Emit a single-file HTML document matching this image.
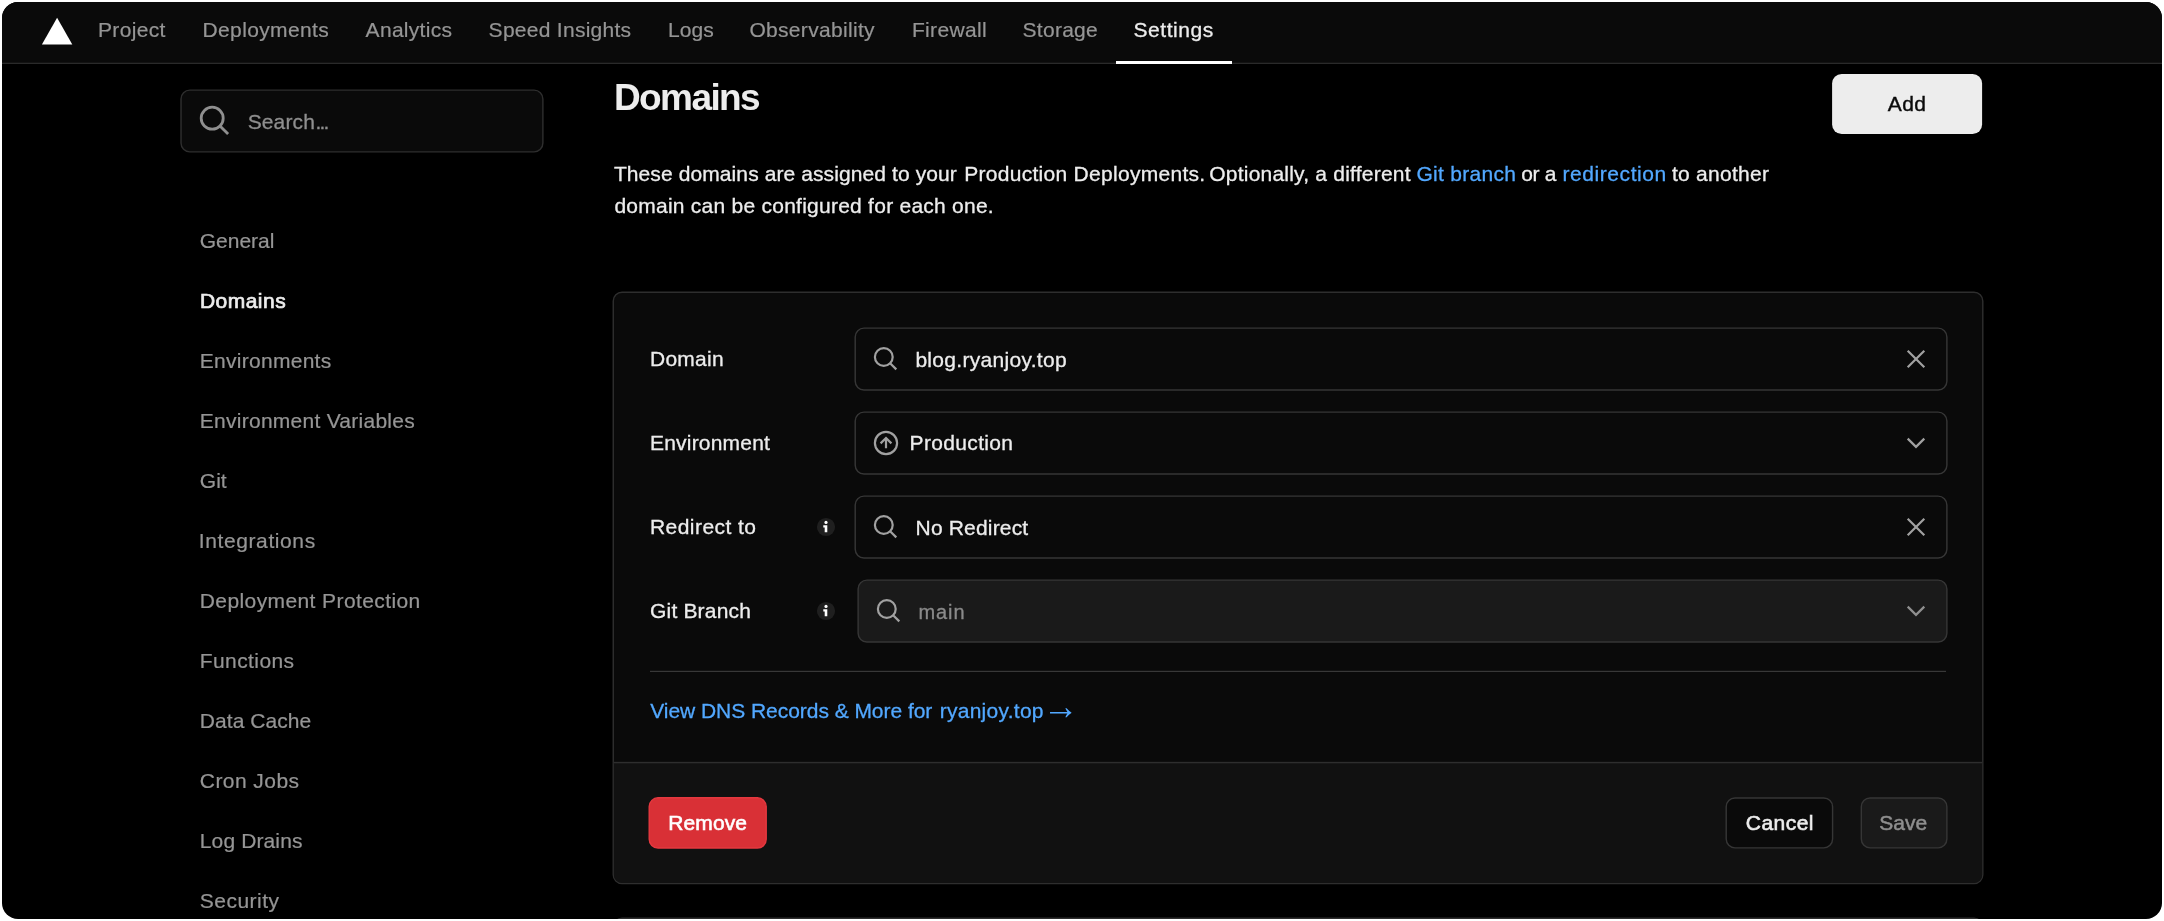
<!DOCTYPE html>
<html lang="en"><head><meta charset="utf-8"><title>Domains – Project Settings</title>
<style>
html,body{margin:0;padding:0;background:#fff;}
body{width:2164px;height:921px;overflow:hidden;position:relative;font-family:"Liberation Sans",sans-serif;}
.win{position:absolute;left:2px;top:2px;width:2160px;height:917px;border-radius:16px;background:#000;overflow:hidden;}
.page{position:absolute;left:-2px;top:-2px;width:2164px;height:921px;will-change:transform;}
.page svg{position:absolute;left:0;top:0;}
.tx text{font-family:"Liberation Sans",sans-serif;white-space:pre;}
</style></head><body>
<div class="win"><div class="page">
<svg width="2164" height="921" viewBox="0 0 2164 921">
<rect x="0" y="0" width="2164" height="62.6" fill="#0a0a0a"/>
<rect x="0" y="62.6" width="2164" height="1.4" fill="#2a2a2a"/>
<rect x="1116" y="61" width="116" height="3" fill="#ffffff"/>
<path d="M57.1 17.8L72.3 44.4H41.9Z" fill="#fff"/>
<rect x="181.02" y="90.12" width="361.86" height="61.76" rx="8.78" fill="#0a0a0a" stroke="#2e2e2e" stroke-width="1.44"/>
<g fill="none" stroke="#8f8f8f" stroke-width="2.8"><circle cx="212.2" cy="118.2" r="11.0"/><path d="M219.98 125.98L228.1 134.1"/></g>
<rect x="1832.10" y="73.90" width="150.00" height="60.20" rx="9.50" fill="#ededed"/>
<rect x="613.27" y="292.27" width="1369.51" height="591.31" rx="8.78" fill="#0a0a0a" stroke="#2e2e2e" stroke-width="1.44"/>
<path d="M613.9 763H1982.1V874.8a8.1 8.1 0 0 1 -8.1 8.1H622a8.1 8.1 0 0 1 -8.1 -8.1Z" fill="#111111"/>
<rect x="613.9" y="761.85" width="1368.2" height="1.44" fill="#2e2e2e"/>
<rect x="855.22" y="328.12" width="1091.66" height="61.86" rx="8.78" fill="#0a0a0a" stroke="#363636" stroke-width="1.44"/>
<rect x="855.22" y="412.12" width="1091.66" height="61.86" rx="8.78" fill="#0a0a0a" stroke="#363636" stroke-width="1.44"/>
<rect x="855.22" y="496.12" width="1091.66" height="61.86" rx="8.78" fill="#0a0a0a" stroke="#363636" stroke-width="1.44"/>
<rect x="858.12" y="580.12" width="1088.76" height="61.86" rx="8.78" fill="#1a1a1a" stroke="#363636" stroke-width="1.44"/>
<g fill="none" stroke="#a1a1a1" stroke-width="2.2"><circle cx="883.8" cy="357.0" r="8.9"/><path d="M890.09 363.29L896.3 369.4"/></g>
<g fill="none" stroke="#a1a1a1" stroke-width="2.2"><circle cx="883.8" cy="525.0" r="8.9"/><path d="M890.09 531.29L896.3 537.4"/></g>
<g fill="none" stroke="#a1a1a1" stroke-width="2.2"><circle cx="886.8" cy="609.0" r="8.9"/><path d="M893.09 615.29L899.3 621.4"/></g>
<path d="M1907.7 350.7L1924.3 367.3M1924.3 350.7L1907.7 367.3" fill="none" stroke="#a1a1a1" stroke-width="2.2"/>
<path d="M1907.7 518.7L1924.3 535.3M1924.3 518.7L1907.7 535.3" fill="none" stroke="#a1a1a1" stroke-width="2.2"/>
<path d="M1907.7 438.6L1916 446.9L1924.3 438.6" fill="none" stroke="#a1a1a1" stroke-width="2.2"/>
<path d="M1907.7 606.6L1916 614.9L1924.3 606.6" fill="none" stroke="#8f8f8f" stroke-width="2.2"/>
<g fill="none" stroke="#a1a1a1" stroke-width="2.2"><circle cx="886" cy="443" r="11.1"/><path d="M880.6 443.4L886 438L891.4 443.4M886 438.2V448.2"/></g>
<circle cx="826" cy="527" r="9.1" fill="#1f1f1f"/><circle cx="826" cy="522.4" r="1.6" fill="#fff"/><path d="M823.3 525.3H827.3V532.2H824.7V527.5H823.3Z" fill="#fff"/>
<circle cx="826" cy="611" r="9.1" fill="#1f1f1f"/><circle cx="826" cy="606.4" r="1.6" fill="#fff"/><path d="M823.3 609.3H827.3V616.2H824.7V611.5H823.3Z" fill="#fff"/>
<rect x="650" y="670.8" width="1296" height="1.2" fill="#383838"/>
<rect x="649.22" y="797.82" width="116.96" height="50.26" rx="8.78" fill="#d93036" stroke="#e5383f" stroke-width="1.44"/>
<rect x="1726.22" y="797.92" width="106.36" height="49.96" rx="8.78" fill="#0a0a0a" stroke="#363636" stroke-width="1.44"/>
<rect x="1861.32" y="797.92" width="85.56" height="49.96" rx="8.78" fill="#1a1a1a" stroke="#363636" stroke-width="1.44"/>
<rect x="613.27" y="918.22" width="1369.51" height="81.06" rx="8.78" fill="#0a0a0a" stroke="#2e2e2e" stroke-width="1.44"/>
<g class="tx">
<text x="98.00" y="37.00" fill="#959595" stroke="#959595" stroke-width="0.22" style="font-size:21px;letter-spacing:0.333px;">Project</text>
<text x="202.50" y="37.00" fill="#959595" stroke="#959595" stroke-width="0.22" style="font-size:21px;letter-spacing:0.370px;">Deployments</text>
<text x="365.60" y="37.00" fill="#959595" stroke="#959595" stroke-width="0.22" style="font-size:21px;letter-spacing:0.300px;">Analytics</text>
<text x="488.60" y="37.00" fill="#959595" stroke="#959595" stroke-width="0.22" style="font-size:21px;letter-spacing:0.277px;">Speed Insights</text>
<text x="667.90" y="37.00" fill="#959595" stroke="#959595" stroke-width="0.22" style="font-size:21px;letter-spacing:0.133px;">Logs</text>
<text x="749.40" y="37.00" fill="#959595" stroke="#959595" stroke-width="0.22" style="font-size:21px;letter-spacing:0.317px;">Observability</text>
<text x="911.90" y="37.00" fill="#959595" stroke="#959595" stroke-width="0.22" style="font-size:21px;letter-spacing:0.343px;">Firewall</text>
<text x="1022.60" y="37.00" fill="#959595" stroke="#959595" stroke-width="0.22" style="font-size:21px;letter-spacing:0.267px;">Storage</text>
<text x="1133.50" y="37.00" fill="#ededed" stroke="#ededed" stroke-width="0.3" style="font-size:21px;letter-spacing:0.543px;">Settings</text>
<text x="199.80" y="248.00" fill="#959595" stroke="#959595" stroke-width="0.22" style="font-size:21px;letter-spacing:-0.017px;">General</text>
<text x="199.90" y="308.00" fill="#ededed" stroke="#ededed" stroke-width="0.7" style="font-size:21px;letter-spacing:0.483px;">Domains</text>
<text x="199.80" y="368.00" fill="#959595" stroke="#959595" stroke-width="0.22" style="font-size:21px;letter-spacing:0.273px;">Environments</text>
<text x="199.80" y="428.00" fill="#959595" stroke="#959595" stroke-width="0.22" style="font-size:21px;letter-spacing:0.260px;">Environment Variables</text>
<text x="199.80" y="488.00" fill="#959595" stroke="#959595" stroke-width="0.22" style="font-size:21px;letter-spacing:0.000px;">Git</text>
<text x="198.80" y="548.00" fill="#959595" stroke="#959595" stroke-width="0.22" style="font-size:21px;letter-spacing:0.600px;">Integrations</text>
<text x="199.80" y="608.00" fill="#959595" stroke="#959595" stroke-width="0.22" style="font-size:21px;letter-spacing:0.400px;">Deployment Protection</text>
<text x="199.80" y="668.00" fill="#959595" stroke="#959595" stroke-width="0.22" style="font-size:21px;letter-spacing:0.400px;">Functions</text>
<text x="199.80" y="728.00" fill="#959595" stroke="#959595" stroke-width="0.22" style="font-size:21px;letter-spacing:0.056px;">Data Cache</text>
<text x="199.80" y="788.00" fill="#959595" stroke="#959595" stroke-width="0.22" style="font-size:21px;letter-spacing:0.438px;">Cron Jobs</text>
<text x="199.80" y="848.00" fill="#959595" stroke="#959595" stroke-width="0.22" style="font-size:21px;letter-spacing:0.122px;">Log Drains</text>
<text x="199.80" y="908.00" fill="#959595" stroke="#959595" stroke-width="0.22" style="font-size:21px;letter-spacing:0.471px;">Security</text>
<text x="247.70" y="129.00" fill="#8f8f8f" stroke="#8f8f8f" stroke-width="0.3" style="font-size:21px;letter-spacing:0.120px;">Search</text>
<text x="315.60" y="129.00" fill="#8f8f8f" stroke="#8f8f8f" stroke-width="0.3" style="font-size:21px;letter-spacing:-1.900px;">...</text>
<text x="614.00" y="110.00" fill="#ededed" stroke="#ededed" stroke-width="0" style="font-size:37px;letter-spacing:-1.600px;font-weight:700;">Domains</text>
<text x="1887.80" y="111.00" fill="#0a0a0a" stroke="#0a0a0a" stroke-width="0.4" style="font-size:21px;letter-spacing:0.400px;">Add</text>
<text x="613.90" y="181.00" fill="#ededed" stroke="#ededed" stroke-width="0.3" style="font-size:21px;letter-spacing:0.097px;">These domains are assigned to your</text>
<text x="964.20" y="181.00" fill="#ededed" stroke="#ededed" stroke-width="0.3" style="font-size:21px;letter-spacing:0.291px;">Production Deployments.</text>
<text x="1209.30" y="181.00" fill="#ededed" stroke="#ededed" stroke-width="0.3" style="font-size:21px;letter-spacing:0.214px;">Optionally, a different</text>
<text x="1416.40" y="181.00" fill="#52a8ff" stroke="#52a8ff" stroke-width="0.3" style="font-size:21px;letter-spacing:0.289px;">Git branch</text>
<text x="1521.30" y="181.00" fill="#ededed" stroke="#ededed" stroke-width="0.3" style="font-size:21px;letter-spacing:-0.367px;">or a</text>
<text x="1562.50" y="181.00" fill="#52a8ff" stroke="#52a8ff" stroke-width="0.3" style="font-size:21px;letter-spacing:0.570px;">redirection</text>
<text x="1672.00" y="181.00" fill="#ededed" stroke="#ededed" stroke-width="0.3" style="font-size:21px;letter-spacing:0.256px;">to another</text>
<text x="614.40" y="213.00" fill="#ededed" stroke="#ededed" stroke-width="0.3" style="font-size:21px;letter-spacing:0.249px;">domain can be configured for each one.</text>
<text x="650.00" y="366.00" fill="#ededed" stroke="#ededed" stroke-width="0.3" style="font-size:21px;letter-spacing:0.240px;">Domain</text>
<text x="650.00" y="450.00" fill="#ededed" stroke="#ededed" stroke-width="0.3" style="font-size:21px;letter-spacing:0.200px;">Environment</text>
<text x="650.00" y="534.00" fill="#ededed" stroke="#ededed" stroke-width="0.3" style="font-size:21px;letter-spacing:0.440px;">Redirect to</text>
<text x="650.00" y="618.00" fill="#ededed" stroke="#ededed" stroke-width="0.3" style="font-size:21px;letter-spacing:0.189px;">Git Branch</text>
<text x="915.40" y="367.00" fill="#ededed" stroke="#ededed" stroke-width="0.3" style="font-size:21px;letter-spacing:0.300px;">blog.ryanjoy.top</text>
<text x="909.60" y="450.00" fill="#ededed" stroke="#ededed" stroke-width="0.3" style="font-size:21px;letter-spacing:0.333px;">Production</text>
<text x="915.60" y="535.00" fill="#ededed" stroke="#ededed" stroke-width="0.3" style="font-size:21px;letter-spacing:0.170px;">No Redirect</text>
<text x="918.60" y="619.00" fill="#8a8a8a" stroke="#8a8a8a" stroke-width="0.3" style="font-size:20px;letter-spacing:0.867px;">main</text>
<text x="650.20" y="718.00" fill="#52a8ff" stroke="#52a8ff" stroke-width="0.3" style="font-size:21px;letter-spacing:-0.042px;">View DNS Records &amp; More for</text>
<text x="939.70" y="718.00" fill="#52a8ff" stroke="#52a8ff" stroke-width="0.3" style="font-size:21px;letter-spacing:0.270px;">ryanjoy.top</text>
<text x="668.20" y="830.00" fill="#ffffff" stroke="#ffffff" stroke-width="0.6" style="font-size:21px;letter-spacing:0.120px;">Remove</text>
<text x="1745.80" y="830.00" fill="#ededed" stroke="#ededed" stroke-width="0.6" style="font-size:21px;letter-spacing:0.460px;">Cancel</text>
<text x="1879.20" y="830.00" fill="#8f8f8f" stroke="#8f8f8f" stroke-width="0.5" style="font-size:21px;letter-spacing:0.067px;">Save</text>
<text transform="translate(1042.4,719) scale(0.95,1)" fill="#52a8ff" style="font-size:38px">→</text>
</g>
</svg>
</div></div>
</body></html>
